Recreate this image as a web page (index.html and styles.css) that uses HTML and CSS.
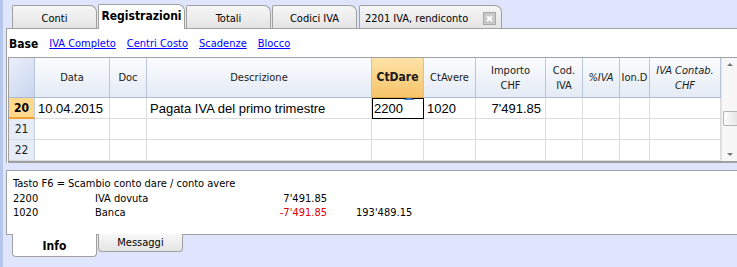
FILE: index.html
```html
<!DOCTYPE html>
<html lang="it">
<head>
<meta charset="utf-8">
<title>Registrazioni</title>
<link rel="stylesheet" href="styles.css">
</head>
<body>
<div class="app">
  <div class="tabbar">
    <div class="tab">Conti</div>
    <div class="tab active">Registrazioni</div>
    <div class="tab">Totali</div>
    <div class="tab">Codici IVA</div>
    <div class="tab wide">2201 IVA, rendiconto <span class="close"><svg width="13" height="13" viewBox="0 0 13 13"><rect x="0.5" y="0.5" width="12" height="12" fill="#c8c8c8" stroke="#a8a8a8"/><path d="M4 4 L9 9 M9 4 L4 9" stroke="#fff" stroke-width="2"/></svg></span></div>
  </div>
  <div class="panel">
    <div class="views">
      <span class="cur">Base</span>
      <a>IVA Completo</a>
      <a>Centri Costo</a>
      <a>Scadenze</a>
      <a>Blocco</a>
    </div>
    <div class="gridwrap">
      <div class="grid">
        <div class="h corner"></div>
        <div class="h">Data</div>
        <div class="h">Doc</div>
        <div class="h">Descrizione</div>
        <div class="h sel">CtDare</div>
        <div class="h">CtAvere</div>
        <div class="h">Importo<br>CHF</div>
        <div class="h">Cod.<br>IVA</div>
        <div class="h it">%IVA</div>
        <div class="h">Ion.D</div>
        <div class="h it">IVA Contab.<br>CHF</div>

        <div class="n cur">20</div>
        <div class="c">10.04.2015</div>
        <div class="c"></div>
        <div class="c">Pagata IVA del primo trimestre</div>
        <div class="c edit">2200<span class="mark"></span></div>
        <div class="c">1020</div>
        <div class="c r">7'491.85</div>
        <div class="c"></div>
        <div class="c"></div>
        <div class="c"></div>
        <div class="c"></div>

        <div class="n">21</div>
        <div class="c"></div><div class="c"></div><div class="c"></div><div class="c"></div><div class="c"></div><div class="c"></div><div class="c"></div><div class="c"></div><div class="c"></div><div class="c"></div>

        <div class="n">22</div>
        <div class="c"></div><div class="c"></div><div class="c"></div><div class="c"></div><div class="c"></div><div class="c"></div><div class="c"></div><div class="c"></div><div class="c"></div><div class="c"></div>
      </div>
      <div class="scroll">
        <div class="arrow up"></div>
        <div class="track"><div class="thumb"></div></div>
        <div class="arrow down"></div>
      </div>
    </div>
  </div>
  <div class="info">
    <div class="line">Tasto F6 = Scambio conto dare / conto avere</div>
    <div class="line acc"><span class="code">2200</span><span class="name">IVA dovuta</span><span class="amt">7'491.85</span><span class="bal"></span></div>
    <div class="line acc"><span class="code">1020</span><span class="name">Banca</span><span class="amt neg">-7'491.85</span><span class="bal">193'489.15</span></div>
  </div>
  <div class="bottomtabs">
    <div class="btab active">Info</div>
    <div class="btab">Messaggi</div>
  </div>
</div>
</body>
</html>
```
FILE: styles.css
```css
* { box-sizing: border-box; }
html, body { margin: 0; padding: 0; }
body {
  background: #dfe5fd;
  font-family: "DejaVu Sans Condensed", "DejaVu Sans", sans-serif;
  font-size: 11px;
  color: #000;
  width: 737px;
  height: 267px;
  overflow: hidden;
}
.app {
  border-left: 3px solid #b5c7ec;
  height: 267px;
  padding-left: 3px;
}
.tabbar {
  display: flex;
  align-items: flex-end;
  height: 28px;
  padding-left: 6px;
  gap: 1px;
  position: relative;
  z-index: 2;
}
.tab {
  width: 85px;
  height: 23px;
  border: 1px solid #a0a0a0;
  border-bottom: none;
  border-radius: 2px 7px 0 0;
  background: linear-gradient(#f6f6f6, #e4e4e4);
  display: flex;
  align-items: center;
  justify-content: center;
  padding-top: 2px;
}
.tab.active {
  height: 25px;
  margin-bottom: -1px;
  background: #fff;
  font-weight: bold;
  font-size: 12px;
  width: 87px;
  padding-top: 0;
  padding-bottom: 3px;
}
.tab.wide {
  width: 143px;
  margin-left: 1px;
  justify-content: flex-start;
  padding-left: 5px;
  gap: 0;
}
.close { margin-left: 15px; display: flex; }
.panel {
  background: #fff;
  border-top: 1px solid #a0a0a0;
  border-left: 1px solid #a0a0a0;
  padding-left: 1px;
}
.views {
  display: flex;
  gap: 0;
  height: 28px;
  align-items: center;
  padding-left: 1px;
  padding-top: 1px;
}
.views .cur { font-weight: bold; font-size: 12px; margin-right: 11px; }
.views a { color: #0000ff; text-decoration: underline; margin-right: 11px; }
.gridwrap {
  display: flex;
  border-top: 1px solid #a0a0a0;
  border-left: 1px solid #a0a0a0;
  border-bottom: 2px solid #a0a0a0;
}
.grid {
  display: grid;
  grid-template-columns: 26px 75px 37px 225px 52px 52px 70px 37px 37px 30px 71px;
  grid-template-rows: 40px 21px 21px 21px;
}
.h {
  background: linear-gradient(#fbfcfe, #e4ebf5);
  border-right: 1px solid #b7c6da;
  border-bottom: 1px solid #a9bad1;
  display: flex;
  align-items: center;
  justify-content: center;
  text-align: center;
  color: #1a1a1a;
  line-height: 15px;
}
.h.corner { background: linear-gradient(135deg, #e9effb, #c9d6ee); }
.h.sel { background: linear-gradient(#fde3a8, #f6c46a); font-weight: bold; font-size: 12px; border-bottom-color: #e3a848; }
.h.it { font-style: italic; }
.n {
  background: #e6edf7;
  border-right: 1px solid #c3cfdf;
  border-bottom: 1px solid #d5dbe4;
  display: flex;
  align-items: center;
  justify-content: center;
  font-size: 12px;
  color: #222;
}
.n.cur { background: #fed88d; font-weight: bold; font-size: 12px; border-bottom: 2px solid #f0a030; color: #000; }
.c {
  border-right: 1px solid #dcdcdc;
  border-bottom: 1px solid #dcdcdc;
  font-family: "Liberation Sans", Arial, sans-serif;
  font-size: 13px;
  display: flex;
  align-items: center;
  padding-left: 3px;
  white-space: nowrap;
  position: relative;
}
.c.r { justify-content: flex-end; padding-right: 4px; }
.c.edit { border: 1px solid #000; padding-left: 1px; }
.mark {
  position: absolute;
  right: 9px;
  top: -1px;
  width: 10px;
  height: 3px;
  border-top: 2px solid #3a7fd0;
  border-radius: 50% 50% 0 0;
}
.scroll {
  width: 16px;
  background: #f7f7f7;
  border-left: 1px solid #e4e4e4;
  display: flex;
  flex-direction: column;
  align-items: center;
}
.arrow { width: 0; height: 0; border-left: 3px solid transparent; border-right: 3px solid transparent; }
.arrow.up { border-bottom: 3px solid #777; margin-top: 5px; }
.arrow.down { border-top: 3px solid #777; margin-bottom: 5px; }
.track { flex: 1; width: 100%; display: flex; flex-direction: column; padding-top: 45px; }
.thumb { height: 15px; margin-left: 1px; border: 1px solid #b4b4b4; border-right: none; border-radius: 2px 0 0 2px; background: linear-gradient(90deg, #fdfdfd, #e6e6e6); }
.info {
  margin-top: 7px;
  background: #fff;
  border-top: 1px solid #a0a0a0;
  border-left: 1px solid #a0a0a0;
  border-bottom: 1px solid #a0a0a0;
  height: 65px;
  padding: 6px 0 0 6px;
}
.line { height: 14.5px; line-height: 14.5px; white-space: nowrap; display: flex; }
.code { width: 82px; }
.name { width: 150px; }
.amt { width: 82px; text-align: right; }
.amt.neg { color: #e00000; }
.bal { margin-left: 29px; }
.bottomtabs { display: flex; padding-left: 6px; margin-top: -1px; gap: 1px; }
.btab {
  width: 85px;
  height: 18px;
  border: 1px solid #a0a0a0;
  border-top: none;
  border-radius: 0 0 4px 4px;
  background: linear-gradient(#f8f8f8, #e4e4e4);
  display: flex;
  align-items: center;
  justify-content: center;
}
.btab.active { height: 23px; background: #fff; font-weight: bold; font-size: 12px; padding-top: 2px; }
```
